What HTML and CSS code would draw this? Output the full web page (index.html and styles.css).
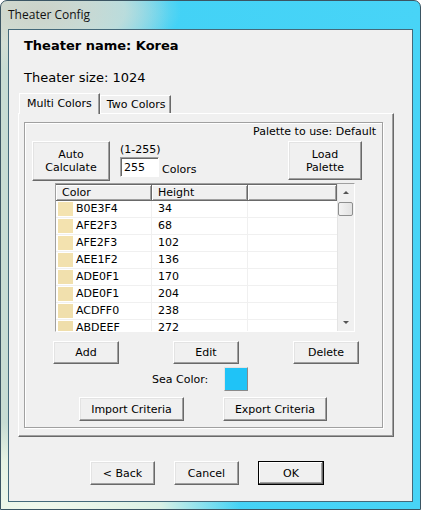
FILE: index.html
```html
<!DOCTYPE html>
<html>
<head>
<meta charset="utf-8">
<link rel="stylesheet" href="styles.css">
</head>
<body>
<div class="window">
  <div class="titlebar">Theater Config</div>
  <div class="client">
    <div class="name">Theater name: Korea</div>
    <div class="size">Theater size: 1024</div>
    <div class="tabs">
      <div class="tab active">Multi Colors</div>
      <div class="tab">Two Colors</div>
    </div>
    <div class="panel">
      <div class="group">
        <div class="palette">Palette to use: Default</div>
        <div class="toprow">
          <button class="btn auto">Auto<br>Calculate</button>
          <div class="range">
            <div class="range-label">(1-255)</div>
            <div class="range-input">
              <div class="input">255</div>
              <span class="colors-label">Colors</span>
            </div>
          </div>
          <button class="btn load">Load<br>Palette</button>
        </div>
        <div class="listview">
          <div class="lv-main">
            <div class="lv-header">
              <div class="hcell c1">Color</div>
              <div class="hcell c2">Height</div>
              <div class="hcell c3"></div>
            </div>
            <div class="lv-row"><div class="cell c1"><span class="sw" style="background:#F4E3B0"></span>B0E3F4</div><div class="cell c2">34</div><div class="cell c3"></div></div>
            <div class="lv-row"><div class="cell c1"><span class="sw" style="background:#F3E2AF"></span>AFE2F3</div><div class="cell c2">68</div><div class="cell c3"></div></div>
            <div class="lv-row"><div class="cell c1"><span class="sw" style="background:#F3E2AF"></span>AFE2F3</div><div class="cell c2">102</div><div class="cell c3"></div></div>
            <div class="lv-row"><div class="cell c1"><span class="sw" style="background:#F2E1AE"></span>AEE1F2</div><div class="cell c2">136</div><div class="cell c3"></div></div>
            <div class="lv-row"><div class="cell c1"><span class="sw" style="background:#F1E0AD"></span>ADE0F1</div><div class="cell c2">170</div><div class="cell c3"></div></div>
            <div class="lv-row"><div class="cell c1"><span class="sw" style="background:#F1E0AD"></span>ADE0F1</div><div class="cell c2">204</div><div class="cell c3"></div></div>
            <div class="lv-row"><div class="cell c1"><span class="sw" style="background:#F0DFAC"></span>ACDFF0</div><div class="cell c2">238</div><div class="cell c3"></div></div>
            <div class="lv-row"><div class="cell c1"><span class="sw" style="background:#EFDEAB"></span>ABDEEF</div><div class="cell c2">272</div><div class="cell c3"></div></div>
          </div>
          <div class="lv-scroll">
            <div class="arrow up"></div>
            <div class="track"><div class="thumb"></div></div>
            <div class="arrow down"></div>
          </div>
        </div>
        <div class="editrow">
          <button class="btn small">Add</button>
          <button class="btn small">Edit</button>
          <button class="btn small">Delete</button>
        </div>
        <div class="searow">
          <span class="sea-label">Sea Color:</span>
          <div class="sea-swatch"></div>
        </div>
        <div class="crit">
          <button class="btn import">Import Criteria</button>
          <button class="btn export">Export Criteria</button>
        </div>
      </div>
    </div>
    <div class="footer">
      <button class="btn foot">&lt; Back</button>
      <button class="btn foot">Cancel</button>
      <button class="btn foot ok">OK</button>
    </div>
  </div>
</div>
</body>
</html>
```
FILE: styles.css
```css
html, body {
  margin: 0;
  padding: 0;
  background: #ffffff;
}
body {
  width: 421px;
  height: 510px;
  overflow: hidden;
}
.window {
  width: 421px;
  height: 510px;
  box-sizing: border-box;
  border: 1px solid #3b5563;
  border-radius: 7px 7px 0 0;
  background:
    radial-gradient(ellipse 140px 60px at 40px 10px, rgba(205,210,200,0.95) 0, rgba(215,222,212,0.7) 60%, rgba(215,222,212,0) 100%),
    radial-gradient(ellipse 200px 90px at 40px 510px, rgba(240,248,236,1) 0, rgba(232,244,228,0.9) 60%, rgba(232,244,228,0) 100%),
    linear-gradient(90deg, #c9dcd2 0, #9fdcea 20%, #43d2f6 40%, #48d4f7 100%);
  display: flex;
  flex-direction: column;
  font-family: "DejaVu Sans", Verdana, sans-serif;
  font-size: 11px;
  color: #000;
}
.titlebar {
  height: 28px;
  box-sizing: border-box;
  padding: 5px 0 0 7px;
  font-family: "Open Sans", "Noto Sans", sans-serif;
  font-size: 12px;
  line-height: 18px;
  color: #111;
}
.client {
  margin-left: 7px;
  width: 405px;
  height: 473px;
  box-sizing: border-box;
  border: 1px solid #44697a;
  background: #f0f0f0;
  padding: 8px 0 0 0;
  display: flex;
  flex-direction: column;
}
.name {
  font-size: 13px;
  font-weight: bold;
  line-height: 16px;
  padding-left: 15px;
}
.size {
  font-size: 13px;
  line-height: 16px;
  padding-left: 15px;
  margin-top: 16px;
}
.tabs {
  display: flex;
  align-items: flex-end;
  margin-top: 8px;
  margin-left: 10px;
  height: 20px;
  margin-bottom: -1px;
  position: relative;
  z-index: 1;
}
.tab {
  box-sizing: border-box;
  height: 18px;
  padding: 0 5px 0 6px;
  line-height: 17px;
  border: 1px solid #fff;
  border-bottom: none;
  border-right: 1px solid #696969;
  box-shadow: inset -1px 0 #a0a0a0;
  background: #f0f0f0;
  margin-bottom: 1px;
}
.tab.active {
  height: 21px;
  padding: 1px 7px 0 7px;
  line-height: 17px;
  margin-bottom: 0;
}
.panel {
  margin-left: 9px;
  width: 376px;
  height: 324px;
  box-sizing: border-box;
  border: 1px solid;
  border-color: #fff #696969 #696969 #fff;
  box-shadow: inset -1px -1px #a0a0a0;
  padding: 8px 0 0 5px;
}
.group {
  width: 359px;
  height: 306px;
  box-sizing: border-box;
  border: 1px solid #a0a0a0;
  box-shadow: 1px 1px #fff, inset 1px 1px #fff;
  display: flex;
  flex-direction: column;
}
.palette {
  margin-top: 2px;
  line-height: 13px;
  text-align: right;
  padding-right: 6px;
}
.btn {
  font-family: "DejaVu Sans", Verdana, sans-serif;
  font-size: 11px;
  color: #000;
  background: #f0f0f0;
  box-sizing: border-box;
  border: 1px solid;
  border-color: #fff #696969 #696969 #fff;
  box-shadow: inset -1px -1px #a0a0a0, inset 1px 1px #e3e3e3;
  padding: 0;
  margin: 0;
  line-height: 13px;
  text-align: center;
}
.toprow {
  display: flex;
  margin-top: 3px;
  height: 40px;
}
.auto {
  margin-left: 7px;
  width: 78px;
  height: 40px;
}
.range {
  margin-left: 10px;
  display: flex;
  flex-direction: column;
}
.range-label {
  line-height: 13px;
  margin-top: 2px;
}
.range-input {
  display: flex;
  align-items: flex-end;
  margin-top: 1px;
}
.input {
  width: 39px;
  height: 20px;
  box-sizing: border-box;
  background: #fff;
  border: 1px solid;
  border-color: #a0a0a0 #fff #fff #a0a0a0;
  box-shadow: inset 1px 1px #696969;
  padding: 3px 0 0 3px;
  line-height: 14px;
}
.colors-label {
  margin-left: 3px;
  line-height: 13px;
  margin-bottom: 1px;
}
.load {
  margin-left: auto;
  margin-right: 20px;
  width: 74px;
  height: 39px;
}
.listview {
  margin-top: 2px;
  margin-left: 30px;
  width: 300px;
  height: 149px;
  box-sizing: border-box;
  border: 1px solid;
  border-color: #a0a0a0 #fff #fff #a0a0a0;
  display: flex;
  background: #fff;
}
.lv-main {
  flex: 1;
  overflow: hidden;
}
.lv-header {
  display: flex;
  height: 17px;
  background: #f0f0f0;
  border-top: 1px solid #696969;
  box-sizing: border-box;
}
.hcell {
  box-sizing: border-box;
  height: 16px;
  line-height: 15px;
  border-right: 1px solid #696969;
  border-bottom: 1px solid #696969;
  box-shadow: inset 1px 1px #fff, inset -1px -1px #a0a0a0;
  padding-left: 6px;
}
.c1 { width: 96px; }
.c2 { width: 96px; }
.c3 { flex: 1; }
.hcell.c3 { flex: 1; }
.lv-row {
  display: flex;
  height: 17px;
}
.cell {
  box-sizing: border-box;
  height: 17px;
  line-height: 16px;
  border-right: 1px solid #f0f0f0;
  border-bottom: 1px solid #f0f0f0;
  display: flex;
  align-items: center;
}
.cell.c1 { padding-left: 2px; }
.cell.c2 { padding-left: 6px; }
.cell.c3 { border-right: none; }
.sw {
  width: 15px;
  height: 14px;
  margin-right: 3px;
  margin-top: -1px;
}
.lv-scroll {
  width: 17px;
  display: flex;
  flex-direction: column;
  background: #f0f0f0;
  border-left: 1px solid #e4e4e4;
  box-sizing: border-box;
}
.arrow {
  height: 17px;
  display: flex;
  justify-content: center;
  align-items: center;
}
.arrow.up::before {
  content: "";
  border-left: 3px solid transparent;
  border-right: 3px solid transparent;
  border-bottom: 3px solid #555;
}
.arrow.down::before {
  content: "";
  border-left: 3px solid transparent;
  border-right: 3px solid transparent;
  border-top: 3px solid #555;
}
.track {
  flex: 1;
  padding-top: 1px;
}
.thumb {
  width: 15px;
  height: 14px;
  margin-left: 0;
  box-sizing: border-box;
  border: 1px solid #8e8f8f;
  border-radius: 2px;
  background: linear-gradient(90deg, #f3f3f3, #e2e2e2);
}
.editrow {
  display: flex;
  margin-top: 9px;
  margin-left: 28px;
  gap: 54px;
}
.small {
  width: 66px;
  height: 23px;
}
.searow {
  display: flex;
  align-items: center;
  margin-top: 3px;
  margin-left: 127px;
  height: 24px;
}
.sea-label {
  width: 72px;
}
.sea-swatch {
  width: 24px;
  height: 24px;
  box-sizing: border-box;
  background: #1fc3f7;
  border: 1px solid;
  border-color: #e3e3e3 #8a8a8a #8a8a8a #e3e3e3;
}
.crit {
  display: flex;
  margin-top: 6px;
  margin-left: 54px;
  gap: 39px;
}
.import {
  width: 105px;
  height: 24px;
}
.export {
  width: 104px;
  height: 24px;
}
.footer {
  display: flex;
  margin-top: 24px;
  margin-left: 81px;
  gap: 19px;
}
.foot {
  width: 65px;
  height: 24px;
}
.ok {
  width: 66px;
  border: 1px solid #000;
  box-shadow: inset -1px -1px #696969, inset 1px 1px #fff, inset -2px -2px #a0a0a0;
}
```
